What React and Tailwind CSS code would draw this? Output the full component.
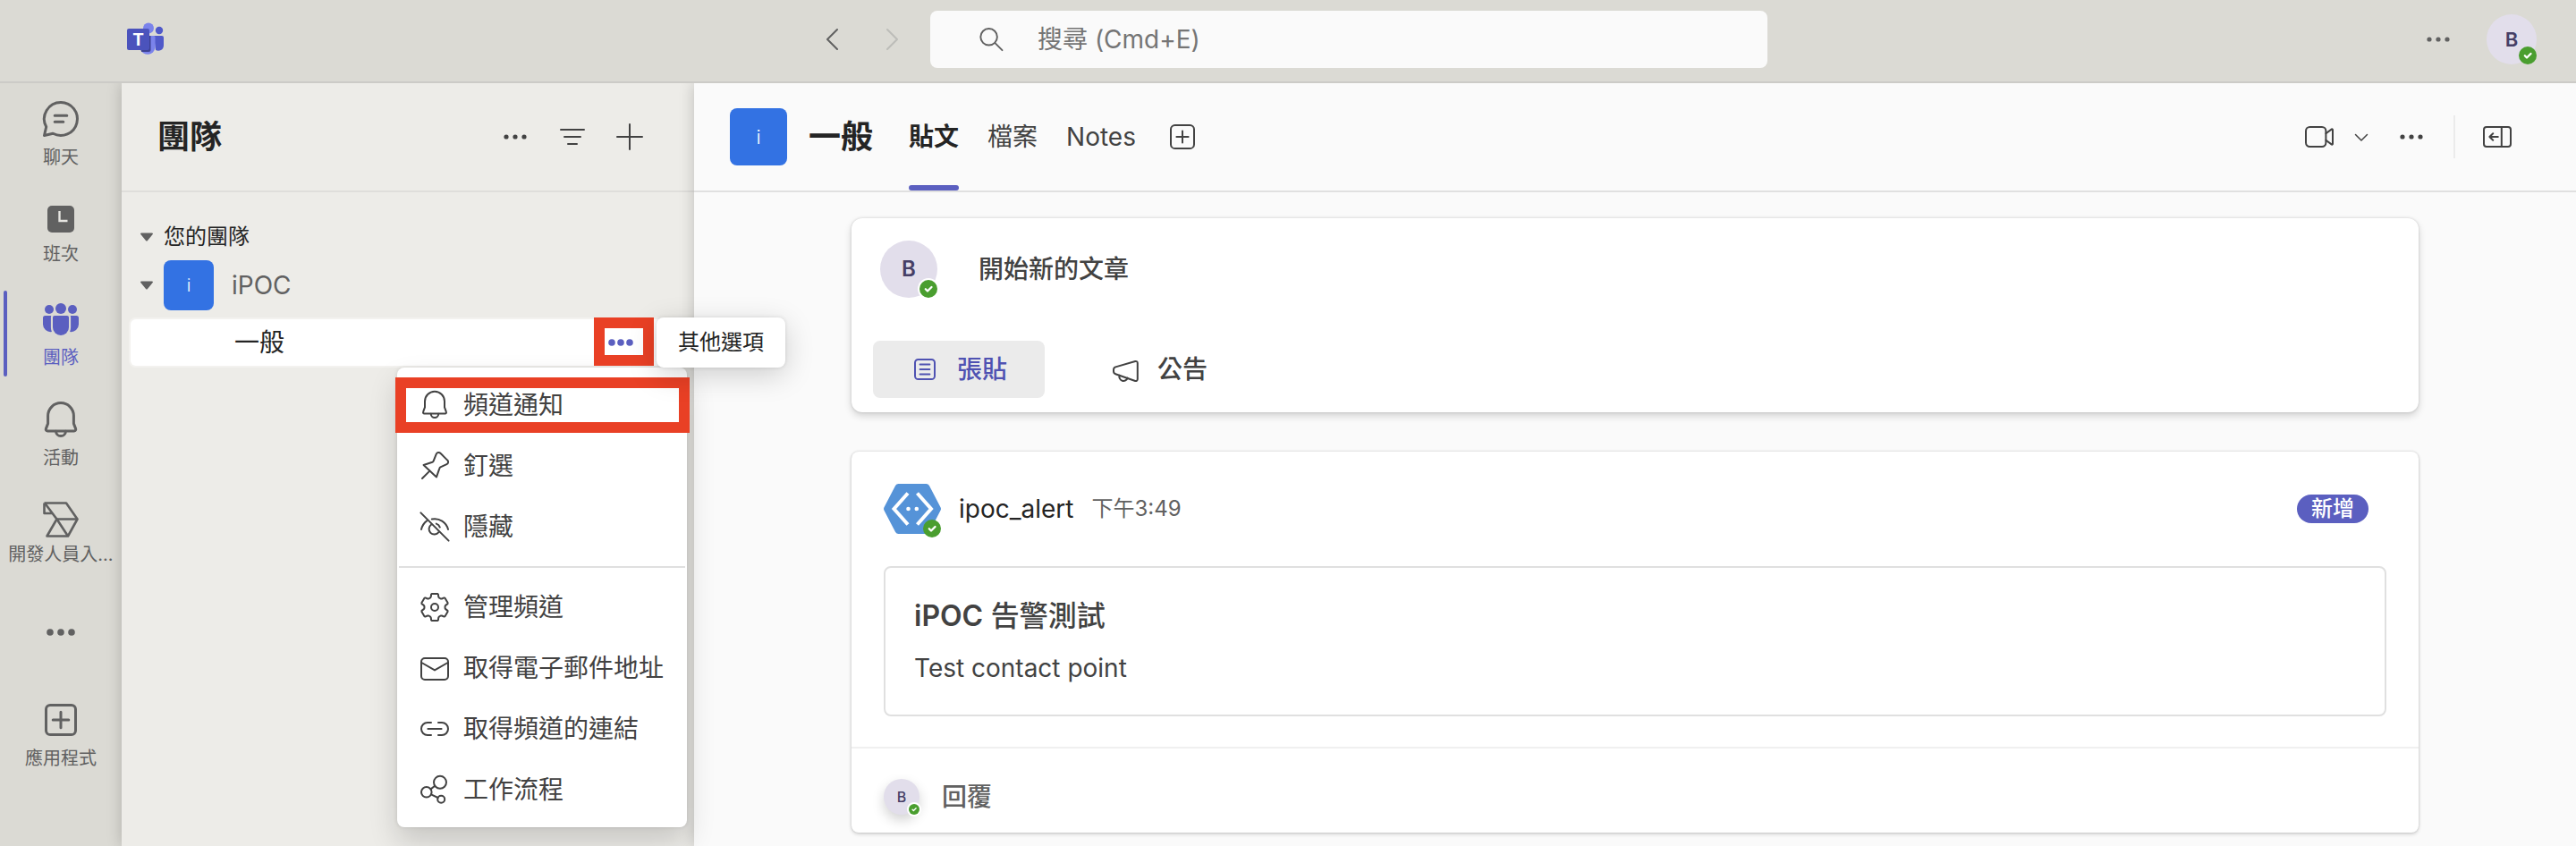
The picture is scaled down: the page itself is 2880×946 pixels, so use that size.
import React from "react";

/* ---------- icons ---------- */

function Line20({ children, className = "size-10" }) {
  return (
    <svg
      viewBox="0 0 20 20"
      className={`shrink-0 ${className}`}
      fill="none"
      stroke="currentColor"
      strokeWidth="1"
      strokeLinecap="round"
      strokeLinejoin="round"
      aria-hidden="true"
    >
      {children}
    </svg>
  );
}

function Line24({ children }) {
  return (
    <svg
      viewBox="0 0 24 24"
      className="size-12 shrink-0"
      fill="none"
      stroke="currentColor"
      strokeWidth="1.5"
      strokeLinecap="round"
      strokeLinejoin="round"
      aria-hidden="true"
    >
      {children}
    </svg>
  );
}

const Dots = ({ r = 1.3, gap = 5 }) => (
  <svg viewBox="0 0 20 20" className="size-10 shrink-0" fill="currentColor" aria-hidden="true">
    <circle cx={10 - gap} cy="10" r={r} />
    <circle cx="10" cy="10" r={r} />
    <circle cx={10 + gap} cy="10" r={r} />
  </svg>
);

const gearPath = (() => {
  const points = [];
  for (let tooth = 0; tooth < 6; tooth++) {
    for (const [offset, radius] of [[-25, 5.8], [-20, 6.2], [-15, 7.5], [-11, 7.7], [11, 7.7], [15, 7.5], [20, 6.2], [25, 5.8]]) {
      const a = ((tooth * 60 + offset) * Math.PI) / 180;
      points.push(`${(10 + radius * Math.sin(a)).toFixed(2)} ${(10 - radius * Math.cos(a)).toFixed(2)}`);
    }
  }
  return `M${points.join("L")}Z`;
})();

const BellSmall = () => (
  <Line20>
    <path d="M10 2.4A5.5 5.5 0 0 0 4.5 7.9v3.3l-.95 2.6a.65.65 0 0 0 .6.9h11.7a.65.65 0 0 0 .6-.9l-.95-2.6V7.9A5.5 5.5 0 0 0 10 2.4Z" />
    <path d="M7.9 14.9a2.1 2.1 0 0 0 4.2 0" />
  </Line20>
);
const Pin = () => (
  <Line20>
    <path d="M10.9 3.3a1.4 1.4 0 0 1 2.3-.4l3.9 3.9a1.4 1.4 0 0 1-.4 2.3l-3.5 1.6a1 1 0 0 0-.5.6L11 16.2 3.8 9.5l4.9-1.6a1 1 0 0 0 .6-.6Z" />
    <path d="M7.2 12.8 3 17" />
  </Line20>
);
const EyeOff = () => (
  <Line20>
    <path d="M2.2 2.2l15.6 15.6" />
    <path d="M2.5 11.5c.5-2 1.6-3.7 3.1-4.8" />
    <path d="M8.4 5.8a7.7 7.7 0 0 1 9.1 5.7" />
    <path d="M8 8.9a3 3 0 1 0 4.2 4.2" />
    <path d="M10.9 8.3a3 3 0 0 1 2 2" />
  </Line20>
);
const Gear = () => (
  <Line20>
    <path d={gearPath} />
    <circle cx="10" cy="10" r="2" />
  </Line20>
);
const Mail = () => (
  <Line20>
    <rect x="2.5" y="4.5" width="15" height="12" rx="2" />
    <path d="M2.7 7 10 11.2 17.3 7" />
  </Line20>
);
const LinkIcon = () => (
  <Line20>
    <path d="M8 6.5H6a3.5 3.5 0 0 0 0 7h2M12 6.5h2a3.5 3.5 0 0 1 0 7h-2M6.2 10h7.6" />
  </Line20>
);
const Flow = () => (
  <Line20>
    <circle cx="13" cy="5.9" r="3.5" />
    <circle cx="5.4" cy="11.4" r="2.9" />
    <circle cx="13.6" cy="15.4" r="2" />
    <path d="m7.8 9.7 2.3-1.8M8 12.7l3.8 1.8" />
  </Line20>
);
const BoxPlus = () => (
  <Line20>
    <rect x="3.5" y="3.5" width="13" height="13" rx="2.3" />
    <path d="M10 6.7v6.6M6.7 10h6.6" />
  </Line20>
);

const ChatIcon = () => (
  <Line24>
    <path d="M12 2.75a9.25 9.25 0 1 1-4.4 17.4l-4.85 1.1 1.1-4.85A9.25 9.25 0 0 1 12 2.75Z" />
    <path d="M8.6 10.1h6.8M8.6 13.6h4.8" />
  </Line24>
);
const ShiftsIcon = () => (
  <svg viewBox="0 0 30 30" className="size-[30px]" aria-hidden="true">
    <rect width="30" height="30" rx="5" fill="currentColor" />
    <path d="M13.5 6v11h9" fill="none" stroke="#e6e5e1" strokeWidth="2.4" />
  </svg>
);
const TeamsIcon = () => (
  <svg viewBox="0 0 40 36" className="h-9 w-10" fill="currentColor" aria-hidden="true">
    <circle cx="7" cy="7" r="5" />
    <circle cx="20" cy="6" r="6" />
    <circle cx="33" cy="7" r="5" />
    <path d="M13 14h14a2 2 0 0 1 2 2v11a9 9 0 0 1-18 0V16a2 2 0 0 1 2-2Z" />
    <path d="M2.5 14h6.8c-.3.6-.4 1.2-.4 2v11c0 1.8.3 3.5 1 5A8.5 8.5 0 0 1 0 23.5V16.5A2.5 2.5 0 0 1 2.5 14Z" />
    <path d="M37.5 14h-6.8c.3.6.4 1.2.4 2v11c0 1.8-.3 3.5-1 5A8.5 8.5 0 0 0 40 23.5V16.5A2.5 2.5 0 0 0 37.5 14Z" />
  </svg>
);
const BellIcon = () => (
  <Line24>
    <path d="M12 2.8A7.2 7.2 0 0 0 4.8 10v4.3l-1.1 2.9a.95.95 0 0 0 .9 1.3h14.8a.95.95 0 0 0 .9-1.3l-1.1-2.9V10A7.2 7.2 0 0 0 12 2.8Z" />
    <path d="M9.3 18.6a2.7 2.7 0 0 0 5.4 0" />
  </Line24>
);
const DevIcon = () => (
  <svg
    viewBox="0 0 40 40"
    className="size-10"
    fill="none"
    stroke="currentColor"
    strokeWidth="2.6"
    strokeLinejoin="round"
    aria-hidden="true"
  >
    <path d="M1.5 1.5H26L38.5 19.5 28 38.5H4.5L15.5 19.5 2 1.5" />
    <path d="M1.5 1.5V13H10M15.5 19.5H38.5M15.5 19.5 28 38.5" />
  </svg>
);
const AppsIcon = () => (
  <Line24>
    <rect x="3.75" y="3.75" width="16.5" height="16.5" rx="2.3" />
    <path d="M12 7.6v8.8M7.6 12h8.8" />
  </Line24>
);
const Caret = () => (
  <svg viewBox="0 0 14 10" className="h-2.5 w-3.5 shrink-0 text-[#616161]" fill="currentColor" aria-hidden="true">
    <path d="M1 .5h12a.9.9 0 0 1 .7 1.5L8 9a1.3 1.3 0 0 1-2 0L.3 2A.9.9 0 0 1 1 .5Z" />
  </svg>
);

const TeamsLogo = () => (
  <svg viewBox="0 0 42 38" className="h-[38px] w-[42px] shrink-0" role="img" aria-label="Microsoft Teams">
    <circle cx="36" cy="9" r="4.2" fill="#5059c9" />
    <path d="M30 15h9a2 2 0 0 1 2 2v9a6 6 0 0 1-9 5Z" fill="#5059c9" />
    <circle cx="24" cy="6.5" r="6" fill="#7b83eb" />
    <path d="M15 15h15a1.5 1.5 0 0 1 1.5 1.5V28a8.5 8.5 0 0 1-16.5 2Z" fill="#7b83eb" />
    <path d="M16 15h10.5v15.5a2.5 2.5 0 0 1-2.5 2.5h-7.8l-1-3Z" fill="#3d4293" />
    <rect x="0" y="7" width="25" height="24" rx="2" fill="#4b53bc" />
    <text x="12.5" y="26" textAnchor="middle" fontSize="19" fontWeight="700" fill="#fff" fontFamily="Inter, sans-serif">
      T
    </text>
  </svg>
);

const BotIcon = () => (
  <svg viewBox="0 0 64 56" className="h-14 w-16" aria-hidden="true">
    <path
      d="M16.5 0h31a4 4 0 0 1 3.4 2L63.4 26a4 4 0 0 1 0 4L50.9 54a4 4 0 0 1-3.4 2h-31a4 4 0 0 1-3.4-2L.6 30a4 4 0 0 1 0-4L13.1 2a4 4 0 0 1 3.4-2Z"
      fill="#5593d8"
    />
    <path d="M27 10.5 11.5 28 27 45.5M37.5 10.5 53 28 37.5 45.5" fill="none" stroke="#fff" strokeWidth="4" />
    <circle cx="27.5" cy="28" r="2.3" fill="#fff" />
    <circle cx="36.8" cy="28" r="2.3" fill="#fff" />
  </svg>
);

/* ---------- shared pieces ---------- */

function Presence({ small = false, ring = false }) {
  return (
    <span
      className={`absolute right-0 bottom-0 flex items-center justify-center rounded-full bg-[#4a9e2f] ${
        small ? "size-3" : "size-5"
      } ${ring ? "ring-2 ring-white" : ""}`}
    >
      <svg
        viewBox="0 0 20 20"
        className="size-full"
        fill="none"
        stroke="#fff"
        strokeWidth="2.3"
        strokeLinecap="round"
        strokeLinejoin="round"
        aria-label="線上"
      >
        <path d="m6.8 10.3 2.2 2.2 4.5-4.5" />
      </svg>
    </span>
  );
}

function TeamTile({ className }) {
  return (
    <span className={`flex shrink-0 items-center justify-center bg-[#3372e3] font-light text-white ${className}`}>
      i
    </span>
  );
}

const railItems = [
  { label: "聊天", icon: <ChatIcon /> },
  { label: "班次", icon: <ShiftsIcon />, compact: true },
  { label: "團隊", icon: <TeamsIcon />, active: true },
  { label: "活動", icon: <BellIcon /> },
  { label: "開發人員入...", icon: <DevIcon />, compact: true },
];

function RailItem({ label, icon, compact, active }) {
  return (
    <button
      type="button"
      className={`relative flex h-28 w-full flex-col items-center ${compact ? "pt-3" : "pt-2"} ${
        active ? "text-[#5b5fc0]" : "text-[#616161]"
      }`}
    >
      {active && <span className="absolute top-1 left-1 h-24 w-1 rounded-full bg-[#5b5fc0]" />}
      <span className={`flex items-center justify-center ${compact ? "h-12" : "h-14"}`}>{icon}</span>
      <span className="text-xl leading-[30px] whitespace-nowrap">{label}</span>
    </button>
  );
}

const menuGroups = [
  [
    { label: "頻道通知", icon: <BellSmall />, marked: true },
    { label: "釘選", icon: <Pin /> },
    { label: "隱藏", icon: <EyeOff /> },
  ],
  [
    { label: "管理頻道", icon: <Gear /> },
    { label: "取得電子郵件地址", icon: <Mail /> },
    { label: "取得頻道的連結", icon: <LinkIcon /> },
    { label: "工作流程", icon: <Flow /> },
  ],
];

function ChannelMenu() {
  return (
    <div
      role="menu"
      className="absolute top-[54px] right-0 z-30 w-[324px] rounded-lg bg-white py-2 text-[#424242] shadow-[0_0_4px_rgba(0,0,0,0.12),0_16px_32px_rgba(0,0,0,0.16)]"
    >
      {menuGroups.map((group, index) => (
        <React.Fragment key={index}>
          {index > 0 && <hr className="mx-0.5 my-2.5 h-0.5 border-0 bg-[#e0e0e0]" />}
          {group.map(({ label, icon, marked }) => (
            <div key={label} className="relative">
              <button type="button" role="menuitem" className="flex h-17 w-full items-center gap-3 pl-[22px] text-[28px]">
                {icon}
                {label}
              </button>
              {marked && (
                <span className="pointer-events-none absolute top-[3px] -right-[3px] -left-0.5 h-[62px] border-12 border-[#e94025]" />
              )}
            </div>
          ))}
        </React.Fragment>
      ))}
    </div>
  );
}

/* ---------- page sections ---------- */

function TopBar() {
  return (
    <header className="relative z-20 flex h-[93px] shrink-0 items-center border-b-2 border-[#cccbc7] bg-[#dbdad4] pb-[3px]">
      <div className="flex w-[1040px] shrink-0 items-center pr-2 pl-[142px]">
        <TeamsLogo />
        <button type="button" aria-label="上一頁" className="ml-auto flex w-17 justify-center text-[#616161]">
          <svg viewBox="0 0 14 26" className="h-[26px] w-3.5" fill="none" stroke="currentColor" strokeWidth="2" strokeLinecap="round" strokeLinejoin="round">
            <path d="M13 2 2 13l11 11" />
          </svg>
        </button>
        <button type="button" aria-label="下一頁" className="flex w-17 justify-center text-[#bdbdb9]">
          <svg viewBox="0 0 14 26" className="h-[26px] w-3.5" fill="none" stroke="currentColor" strokeWidth="2" strokeLinecap="round" strokeLinejoin="round">
            <path d="m1 2 11 11L1 24" />
          </svg>
        </button>
      </div>
      <label className="flex h-16 w-[32.5%] items-center gap-9 rounded-lg bg-[#fafafa] pl-[52px] text-[#616161]">
        <Line20 className="size-8">
          <circle cx="8.5" cy="8.3" r="5.8" strokeWidth="1.2" />
          <path d="m12.8 12.6 5 5" strokeWidth="1.2" />
        </Line20>
        <input
          type="search"
          aria-label="搜尋"
          placeholder="搜尋 (Cmd+E)"
          className="min-w-0 flex-1 bg-transparent text-[28px] outline-none placeholder:text-[#757575]"
        />
      </label>
      <div className="ml-auto flex items-center gap-[34px] pr-11">
        <button type="button" aria-label="設定及其他" className="text-[#616161]">
          <Dots />
        </button>
        <button
          type="button"
          aria-label="帳戶"
          className="relative flex size-14 items-center justify-center rounded-full bg-[#e2deeb] text-[22px] font-semibold text-[#463f66]"
        >
          B
          <Presence />
        </button>
      </div>
    </header>
  );
}

function Rail() {
  return (
    <nav aria-label="應用程式" className="flex w-34 shrink-0 flex-col bg-[#dbdad4] pt-1">
      {railItems.map((item) => (
        <RailItem key={item.label} {...item} />
      ))}
      <button type="button" aria-label="更多應用程式" className="flex h-[100px] items-center justify-center text-[#616161]">
        <Dots r={1.9} gap={6} />
      </button>
      <div className="mt-3">
        <RailItem label="應用程式" icon={<AppsIcon />} />
      </div>
    </nav>
  );
}

function TeamsPane() {
  return (
    <aside className="relative flex w-160 shrink-0 flex-col bg-[#edece8] shadow-[0_0_16px_rgba(0,0,0,0.2)]">
      <div className="flex h-[122px] items-center border-b-2 border-[#dfdedb] px-10">
        <h1 className="text-4xl font-bold text-[#242424]">團隊</h1>
        <div className="ml-auto flex text-[#424242]">
          <button type="button" aria-label="更多選項" className="flex w-16 justify-center">
            <Dots />
          </button>
          <button type="button" aria-label="篩選" className="flex w-16 justify-center">
            <Line20>
              <path d="M3.5 6h13M5.5 10h9M7.5 14h5" />
            </Line20>
          </button>
          <button type="button" aria-label="新增團隊" className="flex w-16 justify-center">
            <Line20>
              <path d="M10 3v14M3 10h14" />
            </Line20>
          </button>
        </div>
      </div>

      <div className="flex flex-col pt-[26px]">
        <button type="button" className="flex h-12 items-center gap-3 pl-[21px] text-2xl text-[#242424]">
          <Caret />
          您的團隊
        </button>
        <button type="button" className="flex h-15 items-center pl-[21px] text-[28px] text-[#616161]">
          <Caret />
          <TeamTile className="mr-5 ml-3 size-14 rounded-lg text-xl" />
          iPOC
        </button>
        <div className="relative mt-2 mr-2 ml-2.5 flex h-13 items-center rounded-md bg-white ring-2 ring-[#f3f2ef]">
          <a href="#general" className="pl-[116px] text-[28px] text-[#242424]">
            一般
          </a>
          <button type="button" aria-label="其他選項" className="mr-[54px] ml-auto text-[#5b5fc0]">
            <Dots r={1.9} />
          </button>
          <ChannelMenu />
          <span className="pointer-events-none absolute -top-0.5 right-[37px] z-30 h-[54px] w-[67px] border-12 border-[#e94025]" />
          <div
            role="tooltip"
            className="absolute -top-0.5 left-[588px] z-40 flex h-14 w-36 items-center justify-center rounded-lg bg-white text-2xl whitespace-nowrap text-[#242424] shadow-[0_0_4px_rgba(0,0,0,0.12),0_8px_32px_rgba(0,0,0,0.18)]"
          >
            其他選項
          </div>
        </div>
      </div>
    </aside>
  );
}

function ChannelHeader() {
  return (
    <div className="flex h-[122px] items-center border-b-2 border-[#e0e0e0] pr-[68px] pl-10 text-[#424242]">
      <TeamTile className="size-16 rounded-lg text-[22px]" />
      <h2 className="ml-6 text-4xl font-bold text-[#242424]">一般</h2>
      <nav aria-label="頻道索引標籤" className="ml-10 flex h-full items-center gap-8 text-[28px]">
        <a href="#posts" aria-current="page" className="relative flex h-full items-center font-bold text-[#242424]">
          貼文
          <span className="absolute bottom-0 left-0 h-1.5 w-full rounded-full bg-[#5b5fc0]" />
        </a>
        <a href="#files">檔案</a>
        <a href="#notes">Notes</a>
        <button type="button" aria-label="新增索引標籤">
          <BoxPlus />
        </button>
      </nav>
      <div className="ml-auto flex items-center">
        <button type="button" aria-label="立即開會">
          <Line20>
            <rect x="2.5" y="4.5" width="11.2" height="11" rx="2.2" />
            <path d="m13.7 8.1 3.1-2.3a.4.4 0 0 1 .7.3v7.8a.4.4 0 0 1-.7.3l-3.1-2.3" />
          </Line20>
        </button>
        <button type="button" aria-label="會議選項" className="ml-[15px] flex w-6 justify-center pt-0.5">
          <svg viewBox="0 0 16 10" className="h-2.5 w-4" fill="none" stroke="currentColor" strokeWidth="1.5" strokeLinecap="round" strokeLinejoin="round">
            <path d="m1.5 1.5 6.5 6.5 6.5-6.5" />
          </svg>
        </button>
        <button type="button" aria-label="更多頻道選項" className="ml-6">
          <Dots />
        </button>
        <span className="mx-[27px] h-12 w-0.5 bg-[#ebebeb]" />
        <button type="button" aria-label="開啟詳細資料窗格">
          <Line20>
            <rect x="2.5" y="4.5" width="15" height="11" rx="1.5" />
            <path d="M12.4 4.5v11M10.4 10H5.7M7.6 8.1 5.7 10l1.9 1.9" />
          </Line20>
        </button>
      </div>
    </div>
  );
}

function Composer() {
  return (
    <section className="rounded-xl bg-white px-6 pt-[25px] pb-4 shadow-[0_0_3px_rgba(0,0,0,0.16),0_4px_8px_rgba(0,0,0,0.16)]">
      <div className="flex items-center gap-[46px] pl-2">
        <span className="relative flex size-16 shrink-0 items-center justify-center rounded-full bg-[#e2deeb] text-2xl font-semibold text-[#463f66]">
          B
          <Presence ring />
        </span>
        <button type="button" className="text-[28px] font-medium text-[#424242]">
          開始新的文章
        </button>
      </div>
      <div className="mt-12 flex gap-8 text-[28px] font-medium">
        <button type="button" className="flex h-16 items-center gap-4 rounded-lg bg-[#ebebeb] pr-[42px] pl-[38px] text-[#4f52b2]">
          <Line20>
            <rect x="4.5" y="4.5" width="11" height="11" rx="1.8" />
            <path d="M7.3 7.3h5.4M7.3 10h5.4M7.3 12.7h5.4" />
          </Line20>
          張貼
        </button>
        <button type="button" className="flex h-16 items-center gap-4 rounded-lg pr-[42px] pl-[38px] text-[#424242]">
          <Line20>
            <path d="M4.6 8.7 15.6 5.5a1 1 0 0 1 1.3.95v9.1a1 1 0 0 1-1.3.95L4.6 12.6a1.6 1.6 0 0 1-1.1-1.5v-.9A1.6 1.6 0 0 1 4.6 8.7Z" />
            <path d="M6.8 13.4a2.3 2.3 0 1 0 4.5 1.4" />
          </Line20>
          公告
        </button>
      </div>
    </section>
  );
}

function Post() {
  return (
    <article className="rounded-lg bg-white shadow-[0_0_3px_rgba(0,0,0,0.18),0_2px_4px_rgba(0,0,0,0.14)]">
      <div className="px-9 pt-8 pb-[34px]">
        <div className="flex items-center">
          <span className="relative flex size-16 shrink-0 items-center">
            <BotIcon />
            <Presence />
          </span>
          <span className="ml-5 text-[28px] text-[#242424]">ipoc_alert</span>
          <time className="ml-5 text-2xl text-[#616161]">下午3:49</time>
          <span className="mr-5 ml-auto flex h-8 items-center rounded-full bg-[#5b5fc0] px-4 text-2xl font-medium text-white">
            新增
          </span>
        </div>
        <div className="mt-8 rounded-lg border-2 border-[#e0e0e0] px-8 pt-[30px] pb-8 text-[#424242]">
          <h3 className="text-[32px] leading-12 font-medium">
            <span className="font-semibold">iPOC</span> 告警測試
          </h3>
          <p className="mt-3.5 text-[28px] leading-10">Test contact point</p>
        </div>
      </div>
      <div className="flex items-center gap-[25px] border-t-2 border-[#f0f0f0] px-9 pt-[34px] pb-5">
        <span className="relative flex size-10 shrink-0 items-center justify-center rounded-full bg-[#e2deeb] text-base font-medium text-[#463f66] shadow-[0_6px_14px_rgba(0,0,0,0.18)]">
          B
          <Presence small ring />
        </span>
        <button type="button" className="text-[28px] leading-10 font-medium text-[#616161]">
          回覆
        </button>
      </div>
    </article>
  );
}

export default function App() {
  return (
    <div className="flex min-h-screen flex-col bg-[#fafafa] font-['Inter','Noto_Sans_CJK_TC',sans-serif]">
      <TopBar />
      <div className="flex flex-1">
        <Rail />
        <TeamsPane />
        <main className="relative flex min-w-0 flex-1 flex-col bg-[#fafafa] shadow-[0_0_16px_rgba(0,0,0,0.2)]">
          <ChannelHeader />
          <div className="flex flex-col gap-11 px-44 pt-[29px] pb-[15px]">
            <Composer />
            <Post />
          </div>
        </main>
      </div>
    </div>
  );
}
